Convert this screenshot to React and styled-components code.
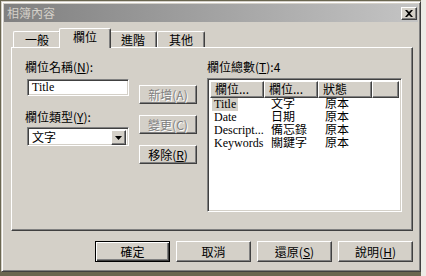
import styled, { createGlobalStyle } from "styled-components";

const GlobalStyle = createGlobalStyle`
  html, body {
    margin: 0;
    padding: 0;
  }
  body {
    width: 426px;
    height: 276px;
    overflow: hidden;
    background: linear-gradient(to right, #6a6650 0, #6a6650 421px, #ecebe6 421px);
    font-family: "Liberation Serif", "Noto Sans CJK TC", serif;
    font-size: 12px;
    color: #000;
  }
`;

const raised = `
  border: 1px solid;
  border-color: #fff #404040 #404040 #fff;
  box-shadow: inset -1px -1px #808080;
`;

const sunken = `
  border: 1px solid;
  border-color: #808080 #fff #fff #808080;
  box-shadow: inset 1px 1px #404040, inset -1px -1px #d4d0c8;
`;

const Window = styled.div`
  margin: 1px 0 0 1px;
  width: 420px;
  height: 271px;
  box-sizing: border-box;
  padding: 2px;
  background: #d4d0c8;
  border: 1px solid;
  border-color: #d4d0c8 #404040 #404040 #d4d0c8;
  box-shadow: inset 1px 1px #fff, inset -1px -1px #808080;
  display: flex;
  flex-direction: column;
`;

const TitleBar = styled.div`
  height: 18px;
  display: flex;
  align-items: flex-start;
  justify-content: space-between;
  padding: 0 1px 0 3px;
  background: linear-gradient(to right, #808080, #c4c4c4);
`;

const TitleText = styled.span`
  line-height: 18px;
  font-size: 12px;
  color: #d4d0c8;
  font-family: "Noto Sans CJK TC", sans-serif;
`;

const CloseButton = styled.div`
  margin-top: 3px;
  width: 16px;
  height: 13px;
  box-sizing: border-box;
  background: #d4d0c8;
  ${raised}
  display: flex;
  align-items: center;
  justify-content: center;
`;

const Client = styled.div`
  flex: 1;
  display: flex;
  flex-direction: column;
  padding: 7px 5px 0 7px;
`;

const TabStrip = styled.div`
  height: 19px;
  display: flex;
  align-items: flex-end;
  padding-left: 2px;
  position: relative;
  z-index: 1;
  margin-bottom: -1px;
`;

const Tab = styled.div`
  width: ${({ $active }) => ($active ? "52px" : "48px")};
  height: ${({ $active }) => ($active ? "20px" : "16px")};
  margin: ${({ $active }) => ($active ? "0 -2px" : "0 0 1px")};
  box-sizing: border-box;
  background: #d4d0c8;
  border-top: 1px solid #fff;
  border-left: 1px solid #fff;
  border-right: 1px solid #404040;
  border-radius: 2px 2px 0 0;
  box-shadow: inset -1px 0 #808080;
  display: flex;
  justify-content: center;
  padding-top: ${({ $active }) => ($active ? "1px" : "1px")};
  line-height: 14px;
  font-family: "Noto Sans CJK TC", sans-serif;
  font-size: 12px;
  position: relative;
  z-index: ${({ $active }) => ($active ? 2 : 1)};
`;

const Panel = styled.div`
  width: 402px;
  height: 184px;
  box-sizing: border-box;
  border: 1px solid;
  border-color: #fff #404040 #404040 #fff;
  box-shadow: inset -1px -1px #808080;
  padding: 12px 0 0 13px;
  display: flex;
  gap: 10px;
`;

const LeftColumn = styled.div`
  width: 104px;
  display: flex;
  flex-direction: column;
`;

const Label = styled.div`
  line-height: 14px;
  font-family: "Noto Sans CJK TC", sans-serif;
  font-size: 12px;
  margin-top: ${({ $top }) => $top || 0}px;
  white-space: nowrap;
  u {
    text-decoration: underline;
  }
`;

const TextBox = styled.div`
  margin: 5px 0 0 2px;
  width: 102px;
  height: 17px;
  box-sizing: border-box;
  background: #fff;
  ${sunken}
  padding-left: 4px;
  line-height: 14px;
`;

const Combo = styled.div`
  margin: 3px 0 0 2px;
  width: 102px;
  height: 19px;
  box-sizing: border-box;
  background: #fff;
  ${sunken}
  padding: 2px;
  display: flex;
  justify-content: space-between;
`;

const ComboText = styled.span`
  padding-left: 2px;
  line-height: 14px;
  font-family: "Noto Sans CJK TC", sans-serif;
`;

const ComboArrow = styled.div`
  width: 15px;
  height: 15px;
  box-sizing: border-box;
  background: #d4d0c8;
  ${raised}
  display: flex;
  align-items: center;
  justify-content: center;
`;

const ButtonColumn = styled.div`
  width: 58px;
  padding-top: 25px;
  display: flex;
  flex-direction: column;
  gap: 11px;
`;

const Button = styled.div`
  width: ${({ $w }) => $w || 58}px;
  height: ${({ $h }) => $h || 19}px;
  box-sizing: border-box;
  background: #d4d0c8;
  border: 1px solid;
  border-color: ${({ $default }) =>
    $default ? "#000" : "#fff #404040 #404040 #fff"};
  box-shadow: ${({ $default }) =>
    $default
      ? "inset 1px 1px #fff, inset -1px -1px #404040, inset -2px -2px #808080"
      : "inset -1px -1px #808080"};
  display: flex;
  align-items: center;
  justify-content: center;
  font-family: "Noto Sans CJK TC", sans-serif;
  font-size: 12px;
  color: ${({ $disabled }) => ($disabled ? "#808080" : "#000")};
  text-shadow: ${({ $disabled }) => ($disabled ? "1px 1px 0 #fff" : "none")};
  white-space: nowrap;
`;

const RightColumn = styled.div`
  width: 195px;
  display: flex;
  flex-direction: column;
`;

const ListView = styled.div`
  margin-top: 4px;
  height: 134px;
  box-sizing: border-box;
  background: #fff;
  ${sunken}
  padding: 2px;
  display: flex;
  flex-direction: column;
`;

const HeaderRow = styled.div`
  display: flex;
  height: 17px;
`;

const HeaderCell = styled.div`
  width: ${({ $w }) => $w}px;
  flex: ${({ $grow }) => ($grow ? 1 : "none")};
  box-sizing: border-box;
  background: #d4d0c8;
  ${raised}
  padding-left: 4px;
  line-height: 14px;
  font-family: "Noto Sans CJK TC", sans-serif;
  white-space: nowrap;
  overflow: hidden;
`;

const Row = styled.div`
  display: flex;
  height: 13px;
  line-height: 13px;
`;

const Cell = styled.div`
  width: ${({ $w }) => $w}px;
  padding-left: ${({ $pad }) => $pad}px;
  box-sizing: border-box;
  white-space: nowrap;
  overflow: hidden;
`;

const Selected = styled.span`
  background: ${({ $on }) => ($on ? "#d4d0c8" : "transparent")};
  padding: 0 2px;
  margin-left: -2px;
`;

const Footer = styled.div`
  margin-top: 10px;
  width: 402px;
  display: flex;
  justify-content: flex-end;
  gap: 6px;
`;

const fields = [
  ["Title", "文字", "原本"],
  ["Date", "日期", "原本"],
  ["Descript...", "備忘錄", "原本"],
  ["Keywords", "關鍵字", "原本"],
];

export default function App() {
  return (
    <>
      <GlobalStyle />
      <Window>
        <TitleBar>
          <TitleText>相簿內容</TitleText>
          <CloseButton>
            <svg width="8" height="7" viewBox="0 0 8 7">
              <path d="M0 0h2l2 2 2-2h2L5 3.5 8 7H6L4 5 2 7H0l3-3.5z" fill="#000" />
            </svg>
          </CloseButton>
        </TitleBar>
        <Client>
          <TabStrip>
            <Tab>一般</Tab>
            <Tab $active>欄位</Tab>
            <Tab>進階</Tab>
            <Tab>其他</Tab>
          </TabStrip>
          <Panel>
            <LeftColumn>
              <Label>
                欄位名稱(<u>N</u>):
              </Label>
              <TextBox>Title</TextBox>
              <Label $top={14}>
                欄位類型(<u>Y</u>):
              </Label>
              <Combo>
                <ComboText>文字</ComboText>
                <ComboArrow>
                  <svg width="7" height="4" viewBox="0 0 7 4">
                    <path d="M0 0h7L3.5 4z" fill="#000" />
                  </svg>
                </ComboArrow>
              </Combo>
            </LeftColumn>
            <ButtonColumn>
              <Button $disabled>新增(A)</Button>
              <Button $disabled>變更(C)</Button>
              <Button>
                移除(<u>R</u>)
              </Button>
            </ButtonColumn>
            <RightColumn>
              <Label>
                欄位總數(<u>T</u>):4
              </Label>
              <ListView>
                <HeaderRow>
                  <HeaderCell $w={54}>欄位...</HeaderCell>
                  <HeaderCell $w={54}>欄位...</HeaderCell>
                  <HeaderCell $w={54}>狀態</HeaderCell>
                  <HeaderCell $grow />
                </HeaderRow>
                {fields.map(([name, type, state], i) => (
                  <Row key={name}>
                    <Cell $w={54} $pad={4}>
                      <Selected $on={i === 0}>{name}</Selected>
                    </Cell>
                    <Cell $w={54} $pad={7}>
                      {type}
                    </Cell>
                    <Cell $w={54} $pad={7}>
                      {state}
                    </Cell>
                  </Row>
                ))}
              </ListView>
            </RightColumn>
          </Panel>
          <Footer>
            <Button $w={75} $h={21} $default>
              確定
            </Button>
            <Button $w={75} $h={21}>
              取消
            </Button>
            <Button $w={75} $h={21}>
              還原(<u>S</u>)
            </Button>
            <Button $w={75} $h={21}>
              說明(<u>H</u>)
            </Button>
          </Footer>
        </Client>
      </Window>
    </>
  );
}
